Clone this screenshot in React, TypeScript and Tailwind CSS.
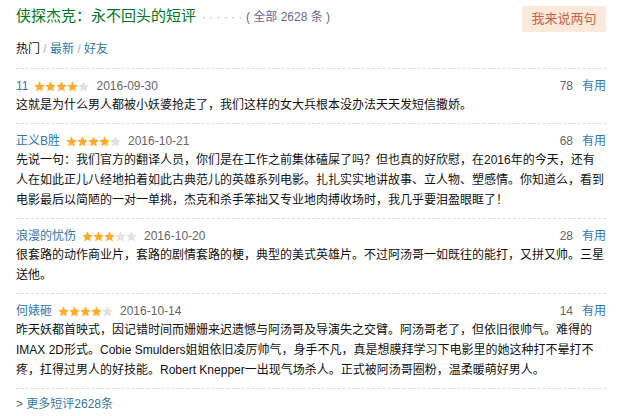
import React from 'react';

type Review = {
    name: string;
    stars: number;
    date: string;
    votes: number;
    text: React.ReactNode;
};

const reviews: Review[] = [
    {
        name: '11',
        stars: 4,
        date: '2016-09-30',
        votes: 78,
        text: '这就是为什么男人都被小妖婆抢走了，我们这样的女大兵根本没办法天天发短信撒娇。',
    },
    {
        name: '正义B胜',
        stars: 4,
        date: '2016-10-21',
        votes: 68,
        text: '先说一句：我们官方的翻译人员，你们是在工作之前集体磕屎了吗？但也真的好欣慰，在2016年的今天，还有人在如此正儿八经地拍着如此古典范儿的英雄系列电影。扎扎实实地讲故事、立人物、塑感情。你知道么，看到电影最后以简陋的一对一单挑，杰克和杀手笨拙又专业地肉搏收场时，我几乎要泪盈眼眶了！',
    },
    {
        name: '浪漫的忧伤',
        stars: 3,
        date: '2016-10-20',
        votes: 28,
        text: '很套路的动作商业片，套路的剧情套路的梗，典型的美式英雄片。不过阿汤哥一如既往的能打，又拼又帅。三星送他。',
    },
    {
        name: '何婊砸',
        stars: 4,
        date: '2016-10-14',
        votes: 14,
        text: '昨天妖都首映式，因记错时间而姗姗来迟遗憾与阿汤哥及导演失之交臂。阿汤哥老了，但依旧很帅气。难得的IMAX 2D形式。Cobie Smulders姐姐依旧凌厉帅气，身手不凡，真是想膜拜学习下电影里的她这种打不晕打不疼，扛得过男人的好技能。Robert Knepper一出现气场杀人。正式被阿汤哥圈粉，温柔暖萌好男人。',
    },
];

const Star: React.FC<{ on: boolean }> = ({ on }) => (
    <svg width="11" height="11" viewBox="1.2 1.2 21.6 21" className="block">
        <path
            d="M12 1.5l3.1 7 7.4.6-5.6 4.9 1.7 7.4L12 17.5l-6.6 3.9 1.7-7.4L1.5 9.1l7.4-.6z"
            fill={on ? '#ffac2d' : '#e1e1e1'}
        />
    </svg>
);

const Stars: React.FC<{ n: number }> = ({ n }) => (
    <span className="flex items-center">
        {[0, 1, 2, 3, 4].map((i) => (
            <Star key={i} on={i < n} />
        ))}
    </span>
);

const App: React.FC = () => {
    return (
        <div
            className="w-[633px] h-[416px] bg-white px-4 pt-[6px] text-[12px] text-[#111]"
            style={{ fontFamily: '"Liberation Sans", Arial, "Noto Sans CJK SC", sans-serif' }}
        >
            {/* header */}
            <div className="flex items-start justify-between w-[590px]">
                <div className="flex items-baseline leading-[20px]">
                    <span className="text-[15px] text-[#007722]">侠探杰克：永不回头的短评</span>
                    <span className="ml-[6px] text-[10px] text-[#9aa89a] tracking-[4px]">······</span>
                    <span className="text-[12px] text-[#666699]">( 全部 2628 条 )</span>
                </div>
                <button className="h-[26px] w-[84px] rounded-[2px] bg-[#fbe9dc] text-[13px] text-[#ca6445]">
                    我来说两句
                </button>
            </div>

            {/* tabs */}
            <div className="mt-[7px] leading-[20px] text-[12px]">
                <span className="text-[#111]">热门</span>
                <span className="text-[#aaa]"> / </span>
                <span className="text-[#3377aa]">最新</span>
                <span className="text-[#aaa]"> / </span>
                <span className="text-[#3377aa]">好友</span>
            </div>

            {/* reviews */}
            <div className="mt-[9px] w-[590px]">
                {reviews.map((r) => (
                    <div key={r.name} className="border-t border-dashed border-[#dddddd] pt-[8px] pb-[8px]">
                        <div className="flex items-center justify-between h-[18px]">
                            <div className="flex items-center gap-[6px]">
                                <span className="text-[#3377aa]">{r.name}</span>
                                <Stars n={r.stars} />
                                <span className="ml-[1px] text-[#666]">{r.date}</span>
                            </div>
                            <div className="flex items-center gap-[9px]">
                                <span className="text-[#666]">{r.votes}</span>
                                <span className="text-[#3377aa]">有用</span>
                            </div>
                        </div>
                        <p className="leading-[20px] text-[#111]">{r.text}</p>
                    </div>
                ))}
                <div className="border-t border-dashed border-[#dddddd] pt-[5px] leading-[20px]">
                    <span className="text-[#666]">&gt; </span>
                    <span className="text-[#3377aa]">更多短评2628条</span>
                </div>
            </div>
        </div>
    );
};

export default App;
